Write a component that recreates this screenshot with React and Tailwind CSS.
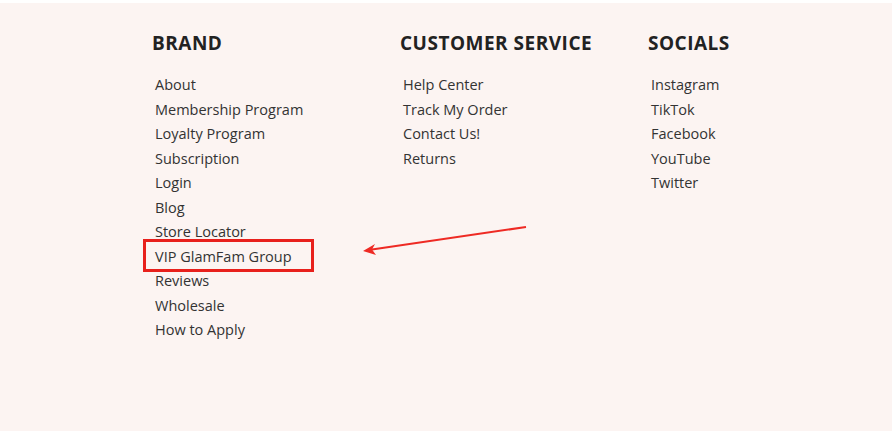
const columns = [
  {
    title: "BRAND",
    links: [
      "About",
      "Membership Program",
      "Loyalty Program",
      "Subscription",
      "Login",
      "Blog",
      "Store Locator",
      "VIP GlamFam Group",
      "Reviews",
      "Wholesale",
      "How to Apply",
    ],
  },
  { title: "CUSTOMER SERVICE", links: ["Help Center", "Track My Order", "Contact Us!", "Returns"] },
  { title: "SOCIALS", links: ["Instagram", "TikTok", "Facebook", "YouTube", "Twitter"] },
];

export default function App() {
  return (
    <div className="h-[431px] w-[892px] overflow-hidden bg-white pt-[3px] font-['Open_Sans',sans-serif]">
      <div className="relative h-full bg-[#fcf4f2] pl-[152px] pt-[27px]">
        <div className="flex">
          {columns.map((col) => (
            <div key={col.title} className="w-[248px] shrink-0">
              <h3 className="text-[19px] leading-[26px] font-bold tracking-[0.5px] text-[#222]">{col.title}</h3>
              <ul className="mt-[17px] pl-[3px]">
                {col.links.map((l) => (
                  <li key={l} className="relative text-[14.5px] leading-[24.5px] text-[#333]">
                    {l}
                    {l === "VIP GlamFam Group" ? (
                      <span className="pointer-events-none absolute -top-[6px] left-[-12px] h-[33px] w-[171px] border-[3px] border-[#e8201c]" />
                    ) : null}
                  </li>
                ))}
              </ul>
            </div>
          ))}
        </div>
        <svg className="absolute left-0 top-0" width="892" height="431" viewBox="0 3 892 431">
          <line x1="526" y1="227" x2="372" y2="249.5" stroke="#ee2a24" strokeWidth="2" />
          <path d="M363 251 L375 244 L372 249.6 L376 255 Z" fill="#ee2a24" />
        </svg>
      </div>
    </div>
  );
}
